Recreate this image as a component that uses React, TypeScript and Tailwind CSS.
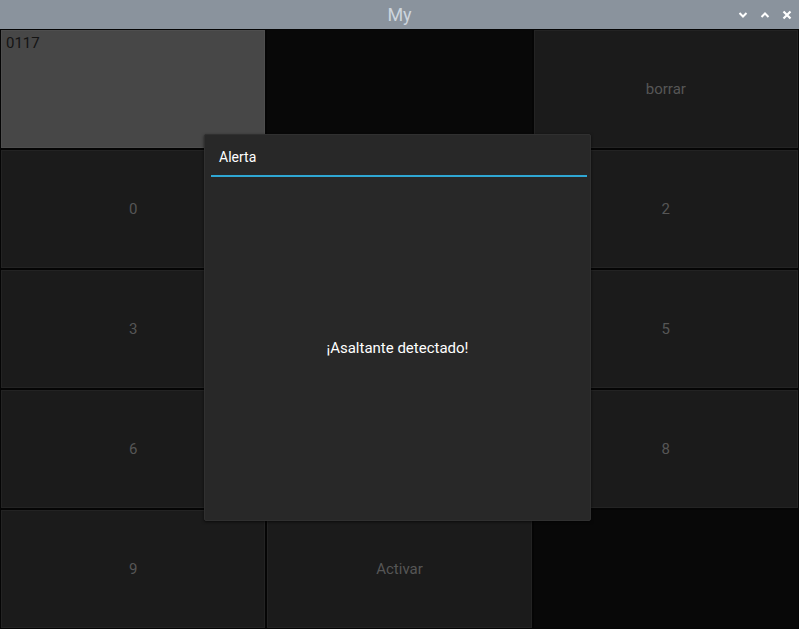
import React from "react";

const cellBase =
  "flex items-center justify-center text-[15px] border border-[#232323] bg-[#1b1b1b] text-[#565656]";

export default function App() {
  return (
    <div
      className="relative w-[799px] h-[629px] bg-[#050505] overflow-hidden"
      style={{ fontFamily: "Roboto, 'Noto Sans', sans-serif" }}
    >
      {/* Title bar */}
      <div className="relative h-[29px] bg-[#8a939d] flex items-center justify-center">
        <span className="text-[18px] text-[#cdd5dd] leading-none">My</span>
        <div className="absolute right-[6px] top-0 h-[29px] flex items-center gap-[10px]">
          <svg width="12" height="12" viewBox="0 0 12 12">
            <path d="M2.5 4 L6 7.5 L9.5 4" stroke="#ffffff" strokeWidth="2" fill="none" />
          </svg>
          <svg width="12" height="12" viewBox="0 0 12 12">
            <path d="M2.5 8 L6 4.5 L9.5 8" stroke="#ffffff" strokeWidth="2" fill="none" />
          </svg>
          <svg width="12" height="12" viewBox="0 0 12 12">
            <path d="M2.5 2.5 L9.5 9.5 M9.5 2.5 L2.5 9.5" stroke="#ffffff" strokeWidth="2.2" fill="none" />
          </svg>
        </div>
      </div>

      {/* Grid */}
      <div className="grid grid-cols-3 grid-rows-5 h-[600px] gap-[2px] p-px">
        <div className="bg-[#474747] border border-[#4e4e4e] text-[15px] leading-[18px] text-[#141414] pl-[4px] pt-[3px]">
          0117
        </div>
        <div className="bg-[#080808]" />
        <div className={cellBase}>borrar</div>

        <div className={cellBase}>0</div>
        <div className={cellBase}>1</div>
        <div className={cellBase}>2</div>

        <div className={cellBase}>3</div>
        <div className={cellBase}>4</div>
        <div className={cellBase}>5</div>

        <div className={cellBase}>6</div>
        <div className={cellBase}>7</div>
        <div className={cellBase}>8</div>

        <div className={cellBase}>9</div>
        <div className={cellBase}>Activar</div>
        <div className="bg-[#080808]" />
      </div>

      {/* Popup */}
      <div className="absolute left-[204px] top-[134px] w-[387px] h-[387px] bg-[#282828] rounded-[2px] border border-[#303030] shadow-[0_1px_3px_rgba(0,0,0,0.6)] flex flex-col">
        <div className="h-[40px] flex items-center pl-[14px] pt-[4px] text-[14px] text-white">Alerta</div>
        <div className="h-[2px] bg-[#2fa7d4] ml-[6px] mr-[3px]" />
        <div className="flex-1 flex items-center justify-center text-[15px] text-white">
          ¡Asaltante detectado!
        </div>
      </div>
    </div>
  );
}
